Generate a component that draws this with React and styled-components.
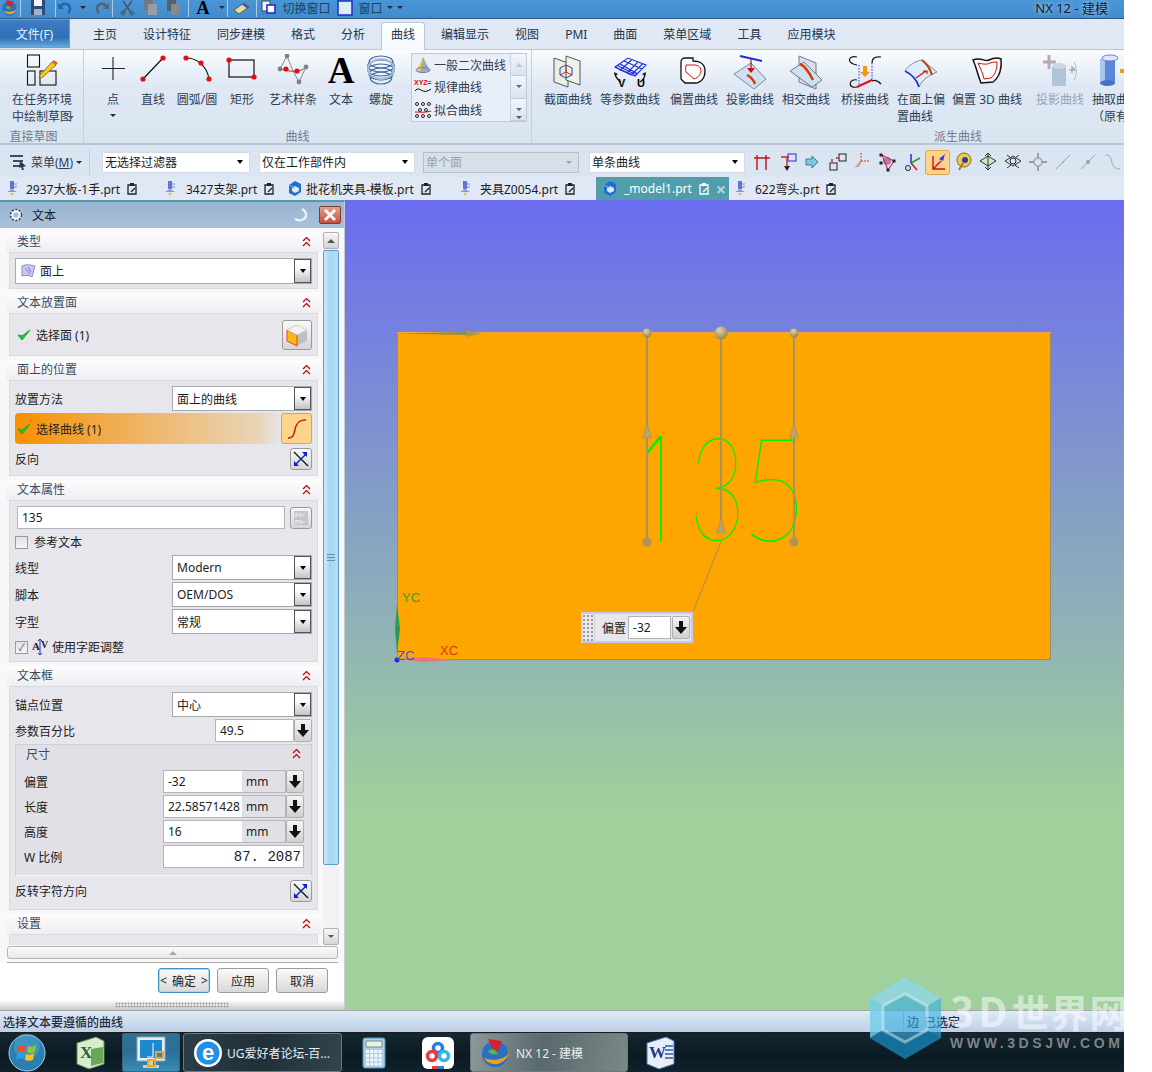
import React from 'react'
import styled, { createGlobalStyle } from 'styled-components'

const UI = `"Noto Sans", "Noto Sans CJK SC", sans-serif`

const GlobalStyle = createGlobalStyle`
  html, body { margin: 0; padding: 0; background: #fff; }
  body { font-family: ${UI}; font-size: 12px; color: #222; }
  * { box-sizing: border-box; }
`

const Frame = styled.div`
  position: relative;
  width: 1124px;
  height: 1072px;
  display: flex;
  flex-direction: column;
  overflow: hidden;
`

/* title bar */
const TitleBar = styled.div`
  height: 19px;
  flex: none;
  display: flex;
  align-items: center;
  padding-bottom: 3px;
  background: linear-gradient(#4a95d4, #3f8ccd);
  border-bottom: 1px solid #2c5a84;
  overflow: hidden;
`
const QuickItem = styled.div`
  width: ${p => p.$w}px;
  flex: none;
  display: flex;
  align-items: center;
  justify-content: center;
  gap: 5px;
  color: #20405c;
  font-size: 12px;
  white-space: nowrap;
`
const QuickSep = styled.div`
  width: 1px;
  height: 18px;
  flex: none;
  background: #a9cbe8;
`
const AppTitle = styled.div`
  margin-left: auto;
  margin-right: 16px;
  color: #10202e;
  font-size: 13px;
  line-height: 14px;
  text-shadow: 0 0 5px #cfe4f5;
`
const SmallCaret = styled.i`
  width: 0;
  height: 0;
  flex: none;
  border-left: 3px solid transparent;
  border-right: 3px solid transparent;
  border-top: 3px solid ${p => p.$c || '#1c2c3c'};
`
const QuickA = styled.span`
  font-family: "Liberation Serif", serif;
  font-weight: 700;
  font-size: 18px;
  line-height: 16px;
  color: #000;
`

/* tabs */
const TabRow = styled.div`
  height: 31px;
  flex: none;
  display: flex;
  align-items: flex-end;
  background: #dfe8f4;
  border-bottom: 1px solid #b9c7d9;
`
const FileButton = styled.div`
  width: 70px;
  height: 29px;
  margin-right: 10px;
  margin-bottom: 1px;
  display: flex;
  align-items: center;
  justify-content: center;
  color: #eaf3fb;
  background: linear-gradient(#3d7dc5, #2e6fb8 65%, #67a8dc);
  border: 1px solid #6c9bcc;
  border-left: none;
`
const Tab = styled.div`
  height: ${p => (p.$active ? 28 : 30)}px;
  padding: 0 ${p => (p.$active ? 9 : 13)}px;
  margin: 0 ${p => (p.$active ? 3 : 0)}px;
  margin-bottom: ${p => (p.$active ? -1 : 0)}px;
  display: flex;
  align-items: center;
  color: #24354a;
  white-space: nowrap;
  ${p => p.$active && `
    padding-bottom: 5px;
    background: linear-gradient(#fff, #f4f8fd);
    border: 1px solid #b9c7d9;
    border-bottom: none;
    border-radius: 3px 3px 0 0;
  `}
`

/* ribbon */
const Ribbon = styled.div`
  height: 95px;
  flex: none;
  display: flex;
  background: linear-gradient(#fafcfe, #dfe8f4 38%, #dae5f2);
  border-bottom: 2px solid #b8c5d6;
  overflow: hidden;
`
const Group = styled.div`
  width: ${p => p.$w}px;
  flex: none;
  display: flex;
  flex-direction: column;
  position: relative;
  ${p => p.$sep && `border-right: 1px solid #c4d1e2;`}
`
const GroupBody = styled.div`
  height: 77px;
  flex: none;
  display: flex;
  padding-left: ${p => p.$pl || 0}px;
`
const GroupLabel = styled.div`
  flex: 1;
  display: flex;
  align-items: center;
  justify-content: center;
  color: #6d7d90;
  padding-right: ${p => p.$pr || 0}px;
  padding-left: ${p => p.$pl || 0}px;
`
const GroupCaret = styled.span`
  position: absolute;
  right: ${p => p.$r || 10}px;
  bottom: 7px;
`
const RibbonBtn = styled.div`
  width: ${p => p.$w}px;
  flex: none;
  display: flex;
  flex-direction: column;
  align-items: center;
  color: ${p => (p.$off ? '#9aa4b2' : '#2e3e52')};
  line-height: 17px;
  white-space: nowrap;
  padding-top: 4px;
`
const IconBox = styled.div`
  height: 37px;
  display: flex;
  justify-content: center;
  align-items: flex-start;
`
const BigA = styled.span`
  font-family: "Liberation Serif", serif;
  font-weight: 700;
  font-size: 37px;
  line-height: 33px;
  color: #000;
`
const CaretSpacer = styled.span`
  margin-top: 6px;
  display: flex;
`
const Gallery = styled.div`
  width: 116px;
  height: 69px;
  margin: 3px 0 0 8px;
  flex: none;
  display: flex;
  background: #e9eff8;
  border: 1px solid #bccada;
`
const GalleryList = styled.div`
  flex: 1;
  display: flex;
  flex-direction: column;
`
const GalleryItem = styled.div`
  height: 23px;
  display: flex;
  align-items: center;
  gap: 2px;
  padding-left: 2px;
  color: #2e3e52;
  white-space: nowrap;
`
const GalleryScroll = styled.div`
  width: 16px;
  flex: none;
  display: flex;
  flex-direction: column;
  border-left: 1px solid #c8d4e2;
`
const GalleryBtn = styled.div`
  flex: 1;
  display: flex;
  align-items: center;
  justify-content: center;
  background: linear-gradient(#f2f6fb, #d8e2ee);
  border-bottom: 1px solid #c0ccdb;
`

/* selection bar */
const SelectionBar = styled.div`
  height: 32px;
  flex: none;
  display: flex;
  align-items: center;
  padding-top: 2px;
  background: #dbe5f2;
`
const MenuBtn = styled.div`
  width: 90px;
  height: 26px;
  flex: none;
  padding-left: 10px;
  display: flex;
  align-items: center;
  gap: 3px;
  color: #2e3e52;
  border-right: 1px solid #c2cfdf;
  white-space: nowrap;
`
const FilterBox = styled.div`
  width: ${p => p.$w}px;
  height: 21px;
  margin-left: ${p => p.$ml}px;
  flex: none;
  display: flex;
  align-items: center;
  justify-content: space-between;
  padding: 0 6px 0 2px;
  background: ${p => (p.$off ? '#d9dfe8' : '#fff')};
  color: ${p => (p.$off ? '#98a2ae' : '#1a1a1a')};
  border: 1px solid ${p => (p.$off ? '#b5bec9' : '#d2dbe6')};
  white-space: nowrap;
`
const ToolStrip = styled.div`
  margin-left: 5px;
  display: flex;
  flex: none;
`
const ToolSlot = styled.div`
  width: 25px;
  height: 25px;
  flex: none;
  display: flex;
  align-items: center;
  justify-content: center;
  ${p => p.$on && `
    background: #fbd38a;
    border: 1px solid #d9a94f;
    border-radius: 3px;
  `}
`

/* open files */
const FileTabs = styled.div`
  height: 23px;
  flex: none;
  display: flex;
  padding-left: 7px;
  background: #dfe8f4;
`
const FileTab = styled.div`
  width: ${p => p.$w}px;
  flex: none;
  display: flex;
  align-items: center;
  gap: 7px;
  padding-left: ${p => (p.$active ? 6 : 0)}px;
  margin-right: ${p => (p.$active ? 6 : 0)}px;
  color: ${p => (p.$active ? '#fff' : '#1c1c1c')};
  background: ${p => (p.$active ? '#4f9eaa' : 'transparent')};
  white-space: nowrap;
`
const FileName = styled.span`
  margin-left: ${p => p.$ml || 0}px;
`
const CloseX = styled.span`
  color: #b8d6da;
  font-size: 18px;
  font-weight: 700;
  line-height: 14px;
`

/* main area */
const Main = styled.div`
  height: 810px;
  flex: none;
  display: flex;
`
const Panel = styled.div`
  width: 345px;
  flex: none;
  display: flex;
  flex-direction: column;
  background: #f8f8f9;
  border-top: 2px solid #4f9eaa;
  border-right: 1px solid #c8ccd2;
`
const PanelHead = styled.div`
  height: 26px;
  flex: none;
  display: flex;
  align-items: center;
  padding: 0 3px 0 9px;
  gap: 9px;
  font-size: 12px;
  color: #16202c;
  background: linear-gradient(#99b5d2, #aac1d9);
`
const HeadSpacer = styled.div`
  flex: 1;
`
const CloseBtn = styled.div`
  width: 22px;
  height: 18px;
  margin-left: 2px;
  display: flex;
  align-items: center;
  justify-content: center;
  background: linear-gradient(#e8a090, #c4503e);
  border: 1px solid #7c3a30;
  border-radius: 2px;
`
const ScrollArea = styled.div`
  height: 713px;
  margin-top: 4px;
  flex: none;
  display: flex;
  padding-left: 6px;
  overflow: hidden;
`
const Sections = styled.div`
  width: 315px;
  flex: none;
  overflow: hidden;
`
const Section = styled.section`
  margin-bottom: 4px;
`
const SectionHead = styled.div`
  height: 20px;
  display: flex;
  align-items: center;
  justify-content: space-between;
  padding: 0 10px 2px 11px;
  color: #3a4a5e;
  background: linear-gradient(#fdfdfe, #eeeef2);
`
const SectionBody = styled.div`
  margin: 0 3px;
  padding: ${p => p.$pad || '5px 5px 5px'};
  background: #e6e6ec;
  border: 1px solid #dadae0;
`
const Row = styled.div`
  height: ${p => p.$h}px;
  margin-top: ${p => p.$mt || 0}px;
  display: flex;
  align-items: center;
  justify-content: space-between;
  color: #222;
  white-space: nowrap;
`
const Inline = styled.div`
  display: flex;
  align-items: center;
  gap: ${p => p.$gap || 5}px;
  padding-left: ${p => p.$pl || 0}px;
`
const Select = styled.div`
  width: ${p => p.$w}px;
  height: ${p => p.$h || 25}px;
  flex: none;
  display: flex;
  align-items: center;
  gap: 4px;
  padding-left: 4px;
  background: #fff;
  border: 1px solid #a8a8ae;
`
const SelectText = styled.span`
  flex: 1;
`
const SelectBtn = styled.div`
  width: 17px;
  align-self: stretch;
  flex: none;
  display: flex;
  align-items: center;
  justify-content: center;
  background: linear-gradient(#fff 30%, #c4c4c4);
  border: 1px solid #555;
`
const CaretDown = styled.i`
  width: 0;
  height: 0;
  border-left: 3.5px solid transparent;
  border-right: 3.5px solid transparent;
  border-top: 4px solid #000;
`
const IconBtn = styled.div`
  width: ${p => p.$s}px;
  height: ${p => p.$s}px;
  flex: none;
  display: flex;
  align-items: center;
  justify-content: center;
  background: ${p => (p.$hot ? '#fdd488' : 'linear-gradient(#f8f8f8, #d6d6d6)')};
  border: 1px solid ${p => (p.$hot ? '#d4a84e' : '#9a9a9a')};
  border-radius: 3px;
`
const HotStrip = styled.div`
  flex: 1;
  height: 31px;
  display: flex;
  align-items: center;
  gap: 5px;
  padding-left: 2px;
  background: linear-gradient(90deg, #f88f00, #f1ab4c 35%, #e8d5b8 92%, #e6e6ec);
  border-radius: 4px 0 0 4px;
`
const TextField = styled.div`
  width: ${p => p.$w}px;
  height: 23px;
  margin-left: ${p => p.$ml || 0}px;
  flex: none;
  display: flex;
  align-items: center;
  padding-left: 4px;
  background: #fff;
  border: 1px solid #b4b4ba;
`
const Check = styled.span`
  width: 13px;
  height: 13px;
  flex: none;
  display: flex;
  align-items: center;
  justify-content: center;
  background: linear-gradient(#e2e2e6, #f6f6f8);
  border: 1px solid #9a9aa0;
  color: #46559a;
  font-size: 10px;
  line-height: 10px;
`
const ArrowBtn = styled.div`
  width: 18px;
  height: 23px;
  flex: none;
  display: flex;
  align-items: center;
  justify-content: center;
  background: linear-gradient(#f4f4f4, #d0d0d0);
  border: 1px solid #b0b0b0;
  border-radius: 2px;
`
const Spinner = styled.div`
  display: flex;
  align-items: center;
`
const DimGroup = styled.div`
  margin-top: 2px;
  height: 132px;
  background: #e0e0e6;
  border: 1px solid #cfcfd6;
  border-bottom-color: #f4f4f6;
`
const DimHead = styled.div`
  height: 22px;
  display: flex;
  align-items: center;
  justify-content: space-between;
  padding: 0 10px 5px 10px;
  color: #3a4a5e;
`
const DimRow = styled.div`
  height: 23px;
  margin-top: ${p => p.$mt || 2}px;
  display: flex;
  align-items: center;
  padding-left: 8px;
`
const DimLabel = styled.span`
  width: 139px;
  flex: none;
`
const DimField = styled.div`
  width: 123px;
  height: 23px;
  flex: none;
  display: flex;
  background: #fff;
  border: 1px solid #b4b4ba;
`
const DimValue = styled.span`
  width: 78px;
  flex: none;
  padding-left: 4px;
  line-height: 21px;
  overflow: hidden;
`
const DimUnit = styled.span`
  flex: 1;
  padding-left: 4px;
  line-height: 22px;
  color: #222;
  background: #e0e0e6;
`
const Ratio = styled.div`
  width: 141px;
  height: 23px;
  flex: none;
  padding-right: 2px;
  text-align: right;
  font-family: "Liberation Mono", monospace;
  font-size: 14px;
  line-height: 22px;
  background: #fff;
  border: 1px solid #b4b4ba;
`
const ScrollBar = styled.div`
  width: 16px;
  margin-left: 2px;
  flex: none;
  display: flex;
  flex-direction: column;
  background: #f2f2f4;
`
const ScrollBtn = styled.div`
  height: 17px;
  flex: none;
  display: flex;
  align-items: center;
  justify-content: center;
  background: linear-gradient(#f8f8f8, #d4d4d4);
  border: 1px solid #b0b0b0;
  border-radius: 2px;
`
const ScrollThumb = styled.div`
  height: 615px;
  margin-top: 1px;
  flex: none;
  display: flex;
  align-items: center;
  justify-content: center;
  background: linear-gradient(90deg, #cfe9fa, #a5d6f4 45%, #b6defa);
  border: 1px solid #5e9cc8;
  border-radius: 2px;
`
const ScrollTrack = styled.div`
  flex: 1;
`
const Grip = styled.div`
  width: 8px;
  height: 7px;
  border-top: 1px solid #5e8fb0;
  border-bottom: 1px solid #5e8fb0;
  background: linear-gradient(#a5d6f4 40%, #5e8fb0 40%, #5e8fb0 60%, #a5d6f4 60%);
`
const CollapseBar = styled.div`
  height: 13px;
  margin: 1px 6px 0 7px;
  flex: none;
  display: flex;
  align-items: center;
  justify-content: center;
  background: linear-gradient(#fafafa, #e8e8ea);
  border: 1px solid #b4b4b4;
  border-radius: 3px;
`
const CaretUp = styled.i`
  width: 0;
  height: 0;
  border-left: 4px solid transparent;
  border-right: 4px solid transparent;
  border-bottom: 4px solid ${p => p.$c || '#a8a8a8'};
`
const PanelRule = styled.div`
  height: 1px;
  margin: 3px 6px 0 7px;
  flex: none;
  background: #a8a8a8;
`
const PanelFoot = styled.div`
  height: 37px;
  flex: none;
  display: flex;
  justify-content: flex-end;
  gap: 7px;
  padding: 5px 16px 0 0;
  background: #fff;
`
const FootBtn = styled.div`
  width: 52px;
  height: 25px;
  display: flex;
  align-items: center;
  justify-content: center;
  gap: ${p => (p.$def ? 5 : 0)}px;
  color: #222;
  background: linear-gradient(#fafafa, #d8d8d8);
  border: 1px solid ${p => (p.$def ? '#3d8fc4' : '#9c9c9c')};
  box-shadow: ${p => (p.$def ? 'inset 0 0 0 1px #a8d8f0' : 'none')};
  border-radius: 3px;
`
const DragBar = styled.div`
  height: 10px;
  flex: none;
  display: flex;
  align-items: center;
  justify-content: center;
  background: linear-gradient(#fff, #c8c8c8);
`
const DragDots = styled.div`
  width: 114px;
  height: 6px;
  background: radial-gradient(#9a9a9a 0.8px, transparent 1.2px) 0 0 / 3px 3px;
`

/* graphics window */
const Viewport = styled.div`
  position: relative;
  flex: 1;
  background: linear-gradient(#6a6cf0, #a0d09c 75%);
`
const ViewSvg = styled.svg`
  display: block;
`
const OffsetPopup = styled.div`
  position: absolute;
  left: 236px;
  top: 412px;
  width: 112px;
  height: 31px;
  display: flex;
  align-items: center;
  gap: 1px;
  background: #e6e6ec;
  border: 1px solid #c7c7ea;
  border-width: 2px 2px 2px 1px;
`
const PopupGrip = styled.div`
  width: 13px;
  align-self: stretch;
  margin-right: 6px;
  flex: none;
  background: radial-gradient(#9c9c9c 1px, transparent 1.5px) 0 0 / 4px 4px;
  border-right: 1px solid #d4d4dc;
`
const PopupField = styled.div`
  width: 43px;
  height: 23px;
  margin-left: 1px;
  flex: none;
  display: flex;
  align-items: center;
  padding-left: 4px;
  background: #fff;
  border: 1px solid #b4b4ba;
`

/* status and task bar */
const StatusBar = styled.div`
  height: 23px;
  flex: none;
  display: flex;
  align-items: center;
  padding-left: 3px;
  color: #1f2d44;
  font-weight: 500;
  background: linear-gradient(#dfeaf6, #bdcee7);
  border-top: 1px solid #a6a6a6;
  border-bottom: 1px solid #1c1c1c;
`
const StatusLeft = styled.div`
  width: 900px;
  flex: none;
`
const StatusRight = styled.div`
  height: 100%;
  display: flex;
  align-items: center;
  gap: 5px;
  padding-left: 3px;
  border-left: 1px solid #a8b8cc;
`
const TaskBar = styled.div`
  height: 39px;
  flex: none;
  display: flex;
  padding-left: 8px;
  background: linear-gradient(#14262f, #0b1a22 60%, #10222b);
`
const TaskSlot = styled.div`
  width: ${p => p.$w}px;
  flex: none;
  display: flex;
  align-items: center;
  justify-content: ${p => p.$left ? 'flex-start' : 'center'};
`
const TaskActive = styled(TaskSlot)`
  margin-right: 3px;
  background: linear-gradient(#2f7294, #2a6f98 50%, #3c8cb4);
  border: 1px solid #3a6478;
  border-radius: 2px;
`
const TaskBtn = styled.div`
  width: ${p => p.$w}px;
  flex: none;
  display: flex;
  align-items: center;
  gap: 4px;
  padding-left: ${p => p.$pl}px;
  color: #e8eef2;
  font-size: 12px;
  white-space: nowrap;
  background: ${p => p.$lit
    ? 'linear-gradient(100deg, #8d9a9c, #59696c 45%, #7a8888)'
    : 'linear-gradient(100deg, #2c3e48, #1f3038 50%, #33454c)'};
  border: 1px solid #6a7a80;
  border-radius: 3px;
`

/* watermark */
const Watermark = styled.div`
  position: absolute;
  left: 869px;
  top: 976px;
  display: flex;
  gap: 8px;
  pointer-events: none;
  white-space: nowrap;
`
const MarkText = styled.div`
  display: flex;
  flex-direction: column;
  padding-top: 9px;
`
const MarkTitle = styled.div`
  color: rgba(255, 255, 255, 0.5);
  font-family: "Noto Sans CJK SC", sans-serif;
  font-weight: 700;
  font-size: 38px;
  line-height: 48px;
  letter-spacing: 1px;
`
const MarkLatin = styled.span`
  font-size: 41px;
  letter-spacing: 4px;
`
const MarkUrl = styled.div`
  color: rgba(190, 190, 190, 0.65);
  font-family: "Liberation Sans", sans-serif;
  font-weight: 700;
  font-size: 14px;
  line-height: 16px;
  letter-spacing: 3.6px;
`

/* ---- drawings ---- */
const Red = ({ x, y, r = 2.6 }) => <circle cx={x} cy={y} r={r} fill="#e01010" />

const NxLogo = ({ s = 20 }) => (
  <svg width={s} height={s} viewBox="0 0 32 32">
    <circle cx="15" cy="17" r="13" fill="#2a6fc0" />
    <path d="M4 21c6 9 20 9 26-6-4 7-16 10-26 6z" fill="#f0a020" />
    <path d="M8 2l14 2-6 14z" fill="#d82030" />
    <path d="M8 14c4-3 8-2 10 3-4 1-8 1-10-3z" fill="#50b848" />
  </svg>
)
const SaveIcon = () => (
  <svg width="16" height="16" viewBox="0 0 16 16">
    <rect x="1" y="0" width="14" height="15" fill="#2c4a78" />
    <rect x="4" y="0" width="8" height="6" fill="#f2f4f8" />
    <rect x="4" y="9" width="8" height="6" fill="#9fb4cc" />
  </svg>
)
const UndoIcon = ({ c = '#1d66b8', flip }) => (
  <svg width="16" height="14" viewBox="0 0 16 14" style={flip ? { transform: 'scaleX(-1)' } : undefined}>
    <path d="M3 6c3-5 10-4 10 2 0 2-1 3-2 4" fill="none" stroke={c} strokeWidth="2.5" />
    <path d="M1 2v6h6z" fill={c} />
  </svg>
)
const ScissorIcon = () => (
  <svg width="15" height="16" viewBox="0 0 15 16">
    <path d="M2 14L12 1M12 14L3 1" stroke="#4d5a66" strokeWidth="1.6" />
    <circle cx="3" cy="13" r="2" fill="none" stroke="#4d5a66" />
    <circle cx="12" cy="13" r="2" fill="none" stroke="#4d5a66" />
  </svg>
)
const CopyIcon = ({ dark }) => (
  <svg width="15" height="16" viewBox="0 0 15 16">
    <rect x="1" y="0" width="9" height="11" fill={dark ? '#55606a' : '#6f7a84'} />
    <rect x="5" y="4" width="9" height="11" fill={dark ? '#808a92' : '#959ea6'} />
  </svg>
)
const PenIcon = () => (
  <svg width="18" height="14" viewBox="0 0 18 14">
    <path d="M1 9l10-7 5 4-10 7z" fill="#e8d8b0" stroke="#6a5a3a" />
    <path d="M11 2l5 4-2 1.5-5-4z" fill="#3a5aa8" />
  </svg>
)
const WinIcon = ({ small }) => (
  <svg width="16" height="16" viewBox="0 0 16 16">
    {small
      ? <>
          <rect x="1" y="1" width="8" height="10" fill="#f0f4f8" stroke="#444" />
          <rect x="6" y="5" width="8" height="8" fill="#fff" stroke="#1b2fd0" strokeWidth="1.6" />
        </>
      : <rect x="1" y="1" width="14" height="14" fill="#dcecf8" stroke="#1b2fd0" strokeWidth="1.5" />}
  </svg>
)

const SketchIcon = () => (
  <svg width="32" height="32" viewBox="0 0 32 32">
    <g fill="none" stroke="#111" strokeWidth="1.1">
      <rect x="1.5" y="1" width="12" height="12" />
      <rect x="1.5" y="17" width="7.5" height="14" />
      <rect x="14" y="17" width="16" height="14" />
    </g>
    <path d="M14 21l12-13 4 3-13 12-4 1z" fill="#f6c820" stroke="#7a5a10" strokeWidth=".8" />
    <path d="M26 8l2-2 4 3-2 2z" fill="#e06030" />
  </svg>
)
const CrossIcon = () => (
  <svg width="32" height="32" viewBox="0 0 32 32">
    <path d="M16 3v23M5 14.500h23" stroke="#222" strokeWidth="1.1" />
  </svg>
)
const LineIcon = () => (
  <svg width="32" height="32" viewBox="0 0 32 32">
    <path d="M6 25L26 4" stroke="#111" strokeWidth="1.2" />
    <Red x={6} y={25} /><Red x={26} y={4} />
  </svg>
)
const ArcIcon = () => (
  <svg width="32" height="32" viewBox="0 0 32 32">
    <path d="M5 4C16 4 26 12 28 25" fill="none" stroke="#111" strokeWidth="1.2" />
    <Red x={5} y={4} /><Red x={20} y={9} /><Red x={28} y={25} />
  </svg>
)
const RectIcon = () => (
  <svg width="32" height="32" viewBox="0 0 32 32">
    <rect x="3" y="6" width="25" height="17" fill="none" stroke="#111" strokeWidth="1.2" />
    <Red x={3} y={6} /><Red x={28} y={23} />
  </svg>
)
const SplineIcon = () => (
  <svg width="34" height="32" viewBox="0 0 34 32">
    <path d="M4 15L11 2l6 15 6 11 7-15" fill="none" stroke="#8c8c8c" />
    <path d="M4 15C10 16 14 18 21 17S28 14 30 13" fill="none" stroke="#b03030" />
    {[[4, 15], [11, 2], [23, 28], [30, 13]].map(([x, y]) => <circle key={x} cx={x} cy={y} r="2.400" fill="#808080" />)}
    <Red x={10} y={15} /><Red x={21} y={17} />
  </svg>
)
const HelixIcon = () => (
  <svg width="32" height="32" viewBox="0 0 32 32">
    <g fill="none" stroke="#41689c" strokeWidth="1.2">
      {[8, 12, 16, 20, 24].map(y => <ellipse key={y} cx="16" cy={y} rx={14 - Math.abs(y - 14) / 3} ry="6" />)}
    </g>
    <ellipse cx="16" cy="15" rx="13" ry="10" fill="none" stroke="#a4bcd8" strokeWidth="2" />
  </svg>
)
const SectionCurveIcon = () => (
  <svg width="36" height="34" viewBox="0 0 36 34">
    <path d="M4 4l14 5v24L4 28z" fill="#e8f0e4" stroke="#555" />
    <path d="M16 2l14 5v24l-14-5z" fill="#eef2e8" stroke="#555" />
    <path d="M10 14l6-3 6 3v7l-6 3-6-3z" fill="none" stroke="#2040c0" />
    <path d="M16 11v7l6 3M16 18l-6 3" fill="none" stroke="#d02020" />
  </svg>
)
const IsoIcon = () => (
  <svg width="36" height="34" viewBox="0 0 36 34">
    <g fill="none" stroke="#1c2fd8" strokeWidth="1.100">
      <path d="M3 13l13-9 18 7-11 11zM8 10l18 10M12 7l18 8M20 5.500l-12 11M26 8l-11 11M31 9.500L19 21" />
      <path d="M5.500 11.500l18 9M3 13l16 8" />
    </g>
    <path d="M3 20c1 4 3 6 6 8M33 20c0 3-2 6-5 8" fill="none" stroke="#111" strokeWidth="1.300" />
    <path d="M2 18l4 2-3 2zM34 18l-4 2 3 2z" fill="#111" />
    <text x="6" y="33" fontSize="11" fontFamily="Liberation Sans" fontWeight="700">V</text>
    <text x="25" y="33" fontSize="11" fontFamily="Liberation Sans" fontWeight="700">U</text>
  </svg>
)
const OffsetIcon = () => (
  <svg width="32" height="32" viewBox="0 0 32 32">
    <path d="M3 8c0-3 2-4 4-4h8v3c8 0 12 4 12 10 0 7-4 12-10 12H7l-4-4z" fill="#fff" stroke="#111" strokeWidth="1.300" />
    <path d="M8 11h8c5 0 7 3 7 6s-3 7-7 8l-8-7c-1-2 0-5 0-7z" fill="none" stroke="#d01010" strokeWidth="1" />
  </svg>
)
const ProjectIcon = () => (
  <svg width="36" height="36" viewBox="0 0 36 36">
    <path d="M8 2l22 5" stroke="#1c2fd8" strokeWidth="2" />
    <path d="M2 20L19 9l15 16-12 10z" fill="#cfe0ee" stroke="#7a8a9a" />
    <path d="M19 5v12" stroke="#c01010" strokeWidth="1.200" />
    <path d="M15 14h8l-4 5z" fill="#d01010" />
    <path d="M15 21c4 2 7 6 8 9" fill="none" stroke="#d03a10" strokeWidth="2.500" />
  </svg>
)
const IntersectIcon = () => (
  <svg width="36" height="36" viewBox="0 0 36 36">
    <path d="M11 2l17 7v26l-17-7z" fill="#d9deea" stroke="#6e7a8c" />
    <path d="M2 17L16 8l18 18-10 7z" fill="#cfe0ee" stroke="#6e7a8c" />
    <path d="M12 10c5 2 10 10 13 16" fill="none" stroke="#d03a10" strokeWidth="2.500" />
  </svg>
)
const BridgeIcon = () => (
  <svg width="36" height="36" viewBox="0 0 36 36">
    <path d="M10 3C0 1 0 10 10 11M10 26c-8-2-10 9 0 7" fill="none" stroke="#111" strokeWidth="1.200" />
    <path d="M34 3c-8-1-9 3-9 6M34 30c-4-4-7-4-9-3" fill="none" stroke="#111" strokeWidth="1.200" />
    <path d="M12 11v20M25 9v18" stroke="#1c2fd8" strokeDasharray="1.500 1.500" />
    <path d="M10 33l15-7" stroke="#e01010" strokeWidth="2" />
    <path d="M16 12h4v6h3l-5 5-5-5h3z" fill="#f0981c" />
  </svg>
)
const OnFaceIcon = () => (
  <svg width="36" height="34" viewBox="0 0 36 34">
    <path d="M2 17c4-6 10-10 17-11l15 12c-8 3-15 8-18 15C14 26 8 20 2 17z" fill="#e0ecf6" stroke="#7a8a9a" />
    <path d="M2 17c6 3 12 9 14 16" fill="none" stroke="#1c2fd8" strokeWidth="1.600" />
    <path d="M19 6c5 4 8 8 10 15" fill="none" stroke="#d03a10" strokeWidth="2.200" />
    <path d="M13 24l10-7m-3 0h4v3" fill="none" stroke="#c01010" strokeWidth="1.200" />
  </svg>
)
const Offset3dIcon = () => (
  <svg width="34" height="32" viewBox="0 0 34 32">
    <path d="M3 6c8-3 12 2 16 0 4-2 8-3 12-1 1 8-1 18-8 23L11 29C8 22 6 12 3 6z" fill="#fafafa" stroke="#111" strokeWidth="1.500" />
    <path d="M8 9c5 1 8 2 12 0 3-1 5-1 7-1 0 6-1 12-6 16l-7 1C13 19 10 14 8 9z" fill="none" stroke="#d01010" />
  </svg>
)
const GreyProjectIcon = () => (
  <svg width="38" height="34" viewBox="0 0 38 34">
    <path d="M8 1v14M2 8h13" stroke="#b8a8b4" strokeWidth="3" />
    <path d="M11 12h14v20H11z" fill="#b0c4d8" />
    <ellipse cx="18" cy="12" rx="7" ry="3" fill="#ccd8e4" />
    <path d="M28 16h6l-3-3v6" fill="none" stroke="#a4aebc" strokeWidth="1.500" />
    <path d="M33 8c3 5 3 13 0 18" fill="none" stroke="#b0b8c4" />
  </svg>
)
const ExtractIcon = () => (
  <svg width="40" height="34" viewBox="0 0 40 34">
    <path d="M4 5h15v24H4z" fill="#5d86d8" />
    <path d="M4 5h5v24H4z" fill="#a8c4f0" />
    <ellipse cx="11.500" cy="29" rx="7.500" ry="3" fill="#4a70c4" />
    <ellipse cx="14" cy="4" rx="8" ry="3" fill="#e0e8f4" stroke="#5d86d8" />
    <path d="M24 15h14v-3l4 5-4 5v-3H24z" fill="#f0981c" />
  </svg>
)
const ConicIcon = () => (
  <svg width="18" height="18" viewBox="0 0 18 18">
    <path d="M9 1l7 14c-4 3-10 3-14 0z" fill="#f0d040" />
    <path d="M9 1l-3 15 10-1z" fill="#8098e0" opacity=".7" />
    <ellipse cx="9" cy="14" rx="7" ry="2.500" fill="none" stroke="#6a7ad0" />
  </svg>
)
const LawIcon = () => (
  <svg width="18" height="18" viewBox="0 0 18 18">
    <text x="0" y="7" fontSize="7" fontWeight="700" fill="#d01010" fontFamily="Liberation Sans">XYZ=</text>
    <path d="M1 13c3-4 5-1 8 0s5 0 8-2" fill="none" stroke="#111" />
  </svg>
)
const FitIcon = () => (
  <svg width="18" height="18" viewBox="0 0 18 18">
    <path d="M1 11c5 0 10 1 16-1" fill="none" stroke="#d01010" />
    {[[3, 3], [9, 3], [15, 3], [3, 15], [9, 15], [15, 15], [6, 9], [12, 9]].map(([x, y]) => <circle key={`${x}${y}`} cx={x} cy={y} r="1.500" fill="none" stroke="#222" />)}
  </svg>
)
const MenuIcon = () => (
  <svg width="18" height="18" viewBox="0 0 18 18">
    <path d="M0 3h13M3 8h10M3 13h10" stroke="#3e4e60" strokeWidth="2" />
    <path d="M10 8l6 5-3 1 1 3-2 0-1-3-2 1z" fill="#2c3a48" />
  </svg>
)

const TOOLS = [
  <><path d="M4 3v15M13 3v15M1 6h16" stroke="#c01010" strokeWidth="1.400" /></>,
  <><rect x="10" y="2" width="8" height="7" fill="none" stroke="#1c2fd8" /><path d="M3 5h8M9 5v11" stroke="#d02020" strokeWidth="1.400" /><path d="M6 14h6l-3 5z" fill="#222" /></>,
  <><path d="M3 7h6V4l6 6-6 6v-3H3z" fill="#7ec8e0" stroke="#3d7a9a" /></>,
  <><rect x="11" y="2" width="7" height="7" fill="none" stroke="#222" /><rect x="2" y="11" width="7" height="7" fill="none" stroke="#222" /><path d="M8 6h3M4 10V7" stroke="#d02020" strokeWidth="1.400" /></>,
  <><path d="M8 9h9M8 9V1M8 9l-6 7" stroke="#d44020" strokeDasharray="2 1" /><path d="M8 9l-3 6" stroke="#888" /></>,
  <><path d="M4 3l12 6-6 9z" fill="none" stroke="#c01050" /><circle cx="9" cy="9" r="4" fill="#b03060" opacity=".6" />{[[3, 3], [16, 9], [10, 18], [3, 11]].map(([x, y]) => <rect key={x + y} x={x - 1.500} y={y - 1.500} width="3" height="3" fill="#222" />)}</>,
  <><path d="M8 11V2" stroke="#1c2fd8" strokeWidth="1.500" /><path d="M8 11l9-5" stroke="#20a020" strokeWidth="1.500" /><path d="M8 11l6 7" stroke="#d01010" strokeWidth="1.500" /><circle cx="5" cy="16" r="2.500" fill="none" stroke="#222" /></>,
  <><path d="M5 4v13h12M5 17l8-8" fill="none" stroke="#d01010" strokeWidth="1.400" /><path d="M11 7l6-5-2 7z" fill="#3040c8" /></>,
  <><circle cx="11" cy="8" r="7" fill="#f0c850" stroke="#8a6a20" /><circle cx="12" cy="8" r="3" fill="#2a3ea8" /><path d="M6 18l4-7" stroke="#a08020" strokeWidth="2" /></>,
  <><path d="M2 9l8-5 8 5-8 5z" fill="#c8e8c8" stroke="#333" /><path d="M10 1v17M7 4l3-3 3 3M7 15l3 3 3-3" fill="none" stroke="#333" /></>,
  <><path d="M2 9l8-5 8 5-8 5z" fill="#d8e8f0" stroke="#333" /><circle cx="10" cy="9" r="3" fill="none" stroke="#223" /><path d="M4 3l4 3M16 3l-4 3M4 16l4-3M16 16l-4-3" stroke="#333" /></>,
  <><circle cx="10" cy="10" r="4" fill="none" stroke="#aab4c0" strokeWidth="2" /><path d="M10 1v5M10 14v5M1 10h5M14 10h5" stroke="#a09aa8" strokeWidth="2" /></>,
  <><path d="M3 17L17 3" stroke="#9ca6b2" /><circle cx="10" cy="10" r="1" fill="#9ca6b2" /></>,
  <><path d="M3 17L17 3" stroke="#9ca6b2" /><circle cx="10" cy="10" r="2" fill="#9ca6b2" /></>,
  <><path d="M3 3c5 0 5 4 6 8 1 4 4 6 8 6" fill="none" stroke="#9ca6b2" /></>,
]

const PinIcon = () => (
  <svg width="10" height="15" viewBox="0 0 10 15">
    <path d="M3 0h4v8H3z" fill="#5a7ad0" />
    <path d="M7 3h3M7 6h3" stroke="#7d8ca8" />
    <path d="M0 11h10l-5-3z" fill="#8a9ac8" />
    <path d="M3 12l2 3 2-3z" fill="#f0c020" />
  </svg>
)
const PartCube = () => (
  <svg width="15" height="15" viewBox="0 0 15 15">
    <path d="M2 4l6-4 6 3v8l-6 4-6-3z" fill="#1f6fd0" />
    <path d="M8 5l4 2v3l-4 2-3-2V7z" fill="#dce9fa" />
    <path d="M2 4l6 3" stroke="#8ab8ee" />
  </svg>
)
const DocIcon = ({ c = '#222' }) => (
  <svg width="10" height="12" viewBox="0 0 10 12">
    <path d="M1 2h8v9H1z" fill="none" stroke={c} strokeWidth="1.300" />
    <path d="M3 0h4v3H3z" fill={c} />
    <path d="M4 9l4-4" stroke={c} strokeWidth="1.300" />
  </svg>
)

const Chevrons = () => (
  <svg width="9" height="11" viewBox="0 0 9 11">
    <path d="M1 5l3.500-3.500L8 5M1 10l3.500-3.500L8 10" fill="none" stroke="#c80000" strokeWidth="1.200" />
  </svg>
)
const CheckMark = () => (
  <svg width="14" height="12" viewBox="0 0 14 12">
    <path d="M1 6l4 5 8-10-8 6z" fill="#22c83a" stroke="#18a82c" strokeWidth="1" />
  </svg>
)
const FaceIcon = () => (
  <svg width="16" height="16" viewBox="0 0 16 16">
    <path d="M2 3c4-2 9-1 13 0l-3 11c-3-2-7-2-10-1z" fill="#c6c8f0" stroke="#8a8ec8" />
    <path d="M5 5l5 6M8 4l3 5" stroke="#7a7ec0" />
  </svg>
)
const CubeBtnIcon = () => (
  <svg width="24" height="24" viewBox="0 0 24 24">
    <path d="M12 2l10 5v11l-10 5-10-5V7z" fill="#c0c0c0" />
    <path d="M2 7l10 5v11L2 18z" fill="#f8b818" stroke="#e84818" />
    <path d="M2 7l10-5 10 5-10 5z" fill="#f2f2f2" stroke="#bbb" strokeWidth=".5" />
  </svg>
)
const SCurve = () => (
  <svg width="24" height="24" viewBox="0 0 24 24">
    <path d="M3 21c7 1 6-8 8-12s4-6 10-6" fill="none" stroke="#c01818" strokeWidth="1.500" />
  </svg>
)
const FlipIcon = () => (
  <svg width="18" height="18" viewBox="0 0 18 18">
    <path d="M2 2l14 14" stroke="#111" strokeWidth="1.200" />
    <path d="M4 14L14 4" stroke="#1020c0" strokeWidth="1.500" />
    <path d="M15 2v5l-5-5zM2 16v-5l5 5z" fill="#1020c0" />
  </svg>
)
const ThickArrow = () => (
  <svg width="12" height="13" viewBox="0 0 12 13">
    <path d="M4 0h4v6h4l-6 7-6-7h4z" fill="#111" />
  </svg>
)
const KernIcon = () => (
  <svg width="16" height="18" viewBox="0 0 16 18">
    <text x="0" y="12" fontSize="11" fontWeight="700" fontFamily="Liberation Serif" fill="#222">A</text>
    <text x="9" y="10" fontSize="10" fontWeight="700" fontFamily="Liberation Serif" fill="#222">V</text>
    <path d="M8 1v16M6 3l2-2 2 2M6 15l2 2 2-2" fill="none" stroke="#2030c0" />
  </svg>
)
const ParamIcon = () => (
  <svg width="14" height="14" viewBox="0 0 14 14">
    <rect width="14" height="14" fill="#c4c4ca" />
    <text x="1" y="6" fontSize="5.500" fontWeight="700" fontFamily="Liberation Sans" fill="#f2f2f4">P1=</text>
    <text x="1" y="12.500" fontSize="5.500" fontWeight="700" fontFamily="Liberation Sans" fill="#f2f2f4">P2=</text>
  </svg>
)
const GearIcon = () => (
  <svg width="14" height="14" viewBox="0 0 14 14">
    <circle cx="7" cy="7" r="4" fill="none" stroke="#f4f6f8" strokeWidth="3" />
    <circle cx="7" cy="7" r="5.500" fill="none" stroke="#304458" strokeWidth="1.500" strokeDasharray="2 1.500" />
  </svg>
)
const ResetIcon = () => (
  <svg width="14" height="14" viewBox="0 0 14 14">
    <path d="M1 11c5 3 12 0 11-5-.400-2-2-4-4-5" fill="none" stroke="#eef2f6" strokeWidth="2.200" />
  </svg>
)
const CloseGlyph = () => (
  <svg width="14" height="12" viewBox="0 0 14 12">
    <path d="M2 1l10 10M12 1L2 11" stroke="#fff" strokeWidth="2.800" />
  </svg>
)

const StartOrb = () => (
  <svg width="38" height="38" viewBox="0 0 38 38">
    <circle cx="19" cy="19" r="18" fill="#2a7fb0" stroke="#a8d0e8" />
    <circle cx="19" cy="12" r="13" fill="#6ab8de" opacity=".35" />
    <path d="M10 13c3-2 6-2 8-1l-1 6c-3-1-6-1-8 1z" fill="#e8502a" />
    <path d="M20 12c3 1 5 1 8-1l-1 7c-3 2-6 1-8 0z" fill="#8cc63f" />
    <path d="M9 20c3-2 5-2 8-1l-1 6c-3-1-6-1-8 1z" fill="#2a9fe0" />
    <path d="M18 20c3 1 6 1 8-1l-1 7c-3 1-6 1-8 0z" fill="#f8c020" />
  </svg>
)
const ExcelIcon = () => (
  <svg width="32" height="34" viewBox="0 0 32 34">
    <path d="M3 7L22 1l8 4v23l-15 5-12-5z" fill="#d8ecd0" stroke="#608a50" />
    <path d="M17 13l12-2v16l-12 3z" fill="#6aa858" />
    <text x="6" y="22" fontSize="17" fontWeight="700" fontFamily="Liberation Serif" fill="#1c6a2c">X</text>
  </svg>
)
const MonitorIcon = () => (
  <svg width="36" height="36" viewBox="0 0 36 36">
    <rect x="4" y="2" width="28" height="24" fill="#e8eef4" stroke="#8fa0b0" />
    <rect x="7" y="5" width="22" height="18" fill="#1e88d0" />
    <path d="M16 26h4v4h6v3H10v-3h6z" fill="#c8d0d8" />
    <path d="M20 8v14M20 22h-6" stroke="#fff" />
    <rect x="23" y="17" width="7" height="6" fill="none" stroke="#f0a820" strokeWidth="2" />
    <rect x="15" y="25" width="7" height="6" fill="none" stroke="#f0a820" strokeWidth="2" />
  </svg>
)
const IEIcon = () => (
  <svg width="30" height="30" viewBox="0 0 30 30">
    <circle cx="15" cy="15" r="14" fill="#fff" />
    <circle cx="15" cy="15" r="11.500" fill="#1f8fe8" />
    <text x="15" y="22" textAnchor="middle" fontSize="22" fontWeight="700" fontFamily="Liberation Sans" fill="#fff">e</text>
  </svg>
)
const CalcIcon = () => (
  <svg width="24" height="32" viewBox="0 0 24 32">
    <rect x="1" y="1" width="22" height="30" rx="2" fill="#a8d0ec" stroke="#5a90b8" />
    <rect x="4" y="4" width="16" height="6" fill="#e8f4d8" stroke="#789" />
    {[0, 1, 2, 3].map(r => [0, 1, 2, 3].map(c => <rect key={`${r}${c}`} x={4 + c * 4.200} y={13 + r * 4.200} width="3" height="3" fill="#f4f8fc" />))}
  </svg>
)
const BaiduIcon = () => (
  <svg width="32" height="32" viewBox="0 0 32 32">
    <rect width="32" height="32" rx="6" fill="#fff" />
    <g fill="none" strokeWidth="3.500">
      <circle cx="16" cy="11" r="4.500" stroke="#2e7ce8" />
      <circle cx="10" cy="19" r="4.500" stroke="#e83a3a" />
      <circle cx="22" cy="19" r="4.500" stroke="#30b8e8" />
    </g>
    <path d="M10 29h6v3h-6z" fill="#e83a3a" />
    <path d="M16 29h6v3h-6z" fill="#2e7ce8" />
  </svg>
)
const WordIcon = () => (
  <svg width="32" height="34" viewBox="0 0 32 34">
    <path d="M3 7L22 1l8 4v23l-15 5-12-5z" fill="#e8eef8" stroke="#5070b0" />
    <path d="M21 10h8M21 14h8M21 18h8M21 22h8" stroke="#3058a8" strokeWidth="1.500" />
    <text x="5" y="22" fontSize="17" fontWeight="700" fontFamily="Liberation Serif" fill="#1c3a90">W</text>
  </svg>
)
const HexMark = () => (
  <svg width="73" height="84" viewBox="0 0 73 84">
    <path d="M36 1l36 21v40L36 83 1 62V22z" fill="#38aee0" opacity=".62" />
    <path d="M36 1L72 22 58 30 36 18 14 30 1 22z" fill="#c0ece8" opacity=".55" />
    <path d="M1 22l13 8v24L1 62z" fill="#90dcf0" opacity=".55" />
    <path d="M14 54l22 12 22-12 14 8-36 21L1 62z" fill="#0a6c98" opacity=".65" />
    <path d="M36 18l22 12v24L36 66 14 54V30z" fill="none" stroke="#d8f0f4" strokeWidth="3" opacity=".5" />
  </svg>
)

const Cone = ({ x, y, h = 15, w = 9 }) => (
  <path d={`M${x} ${y}l${w / 2} ${h}h${-w}z`} fill="#b9a468" stroke="#9c8a58" strokeWidth=".5" />
)

/* the text on the part: real text in a hairline face, squeezed to the narrow CAD digits */
const Digit = ({ x, sx, font, children }) => (
  <text
    transform={`translate(${x} 541) scale(${sx} 1)`}
    fontFamily={font}
    fontWeight="100"
    fontSize="144"
    fill="#00f000"
  >
    {children}
  </text>
)

/* graphics window drawing, coordinates match the full screen picture */
const Scene = () => (
  <ViewSvg width="779" height="810" viewBox="345 200 779 810">
    <defs>
      <radialGradient id="ball" cx=".4" cy=".3" r=".8">
        <stop offset="0" stopColor="#e2d4a0" />
        <stop offset="1" stopColor="#8c7a48" />
      </radialGradient>
    </defs>
    <rect x="397.500" y="332.500" width="653" height="327" fill="#ffa500" stroke="#9c8a70" strokeWidth="1" />
    <path d="M397 332.500h654" stroke="#f4a44a" />
    <path d="M398 333.500l68-1.500v3z" fill="#8f8a50" />
    <path d="M466 330l16 3.500-16 3.500z" fill="#a89650" />
    <Digit x={640} sx={0.6} font="Inter, Lato, sans-serif">1</Digit>
    <Digit x={689} sx={0.68} font="Lato, Inter, sans-serif">3</Digit>
    <Digit x={741} sx={0.8} font="Lato, Inter, sans-serif">5</Digit>
    <g stroke="#a8925e" strokeWidth="2">
      <path d="M647 333v209M721 333v190M794 333v209" />
    </g>
    <Cone x={647} y={423} /><Cone x={794} y={423} /><Cone x={721} y={518} />
    <circle cx="647" cy="333" r="4.500" fill="url(#ball)" />
    <circle cx="721" cy="333" r="6.500" fill="url(#ball)" />
    <circle cx="794" cy="333" r="4.500" fill="url(#ball)" />
    <circle cx="647" cy="542" r="4.500" fill="#b09358" />
    <circle cx="794" cy="542" r="4.500" fill="#b09358" />
    <path d="M721 542l-28 70" stroke="#a08a60" />
    <path d="M397 604l3 25-3 25-2-25z" fill="#2f9a58" />
    <path d="M397 659l28-2 29 3-29 2z" fill="#e87878" />
    <circle cx="397" cy="660" r="2.500" fill="#1c2fd8" />
    <text x="402" y="602" fontSize="13" fontFamily="Liberation Sans" fill="#3d9a40">YC</text>
    <text x="397" y="660" fontSize="13" fontFamily="Liberation Sans" fill="#3850e8">ZC</text>
    <text x="440" y="655" fontSize="13" fontFamily="Liberation Sans" fill="#d83820">XC</text>
  </ViewSvg>
)

const RIBBON_A = [
  { w: 40, label: '直线', Icon: LineIcon },
  { w: 48, label: '圆弧/圆', Icon: ArcIcon },
  { w: 42, label: '矩形', Icon: RectIcon },
  { w: 60, label: '艺术样条', Icon: SplineIcon },
]
const RIBBON_B = [
  { w: 56, label: '截面曲线', Icon: SectionCurveIcon },
  { w: 68, label: '等参数曲线', Icon: IsoIcon },
  { w: 60, label: '偏置曲线', Icon: OffsetIcon },
  { w: 52, label: '投影曲线', Icon: ProjectIcon },
  { w: 60, label: '相交曲线', Icon: IntersectIcon },
  { w: 58, label: '桥接曲线', Icon: BridgeIcon },
  { w: 54, label: '在面上偏', second: '置曲线', Icon: OnFaceIcon },
  { w: 78, label: '偏置 3D 曲线', Icon: Offset3dIcon },
  { w: 68, label: '投影曲线', Icon: GreyProjectIcon, off: true },
  { w: 44, label: '抽取曲线', second: '（原有', Icon: ExtractIcon },
]
const TABS = ['主页', '设计特征', '同步建模', '格式', '分析', '曲线', '编辑显示', '视图', 'PMI', '曲面', '菜单区域', '工具', '应用模块']
const FILES = [
  { w: 158, name: '2937大板-1手.prt', Icon: PinIcon, ml: 2 },
  { w: 122, name: '3427支架.prt', Icon: PinIcon, ml: 4 },
  { w: 173, name: '批花机夹具-模板.prt', Icon: PartCube, ml: -3 },
  { w: 136, name: '夹具Z0054.prt', Icon: PinIcon, ml: 3 },
]

const Head = ({ title }) => (
  <SectionHead>{title}<Chevrons /></SectionHead>
)
const DropRow = ({ label, value, mt }) => (
  <Row $h={25} $mt={mt}>
    {label}
    <Select $w={140}><SelectText>{value}</SelectText><SelectBtn><CaretDown /></SelectBtn></Select>
  </Row>
)
const DimLine = ({ label, value, mt }) => (
  <DimRow $mt={mt}>
    <DimLabel>{label}</DimLabel>
    <DimField><DimValue>{value}</DimValue><DimUnit>mm</DimUnit></DimField>
    <ArrowBtn><ThickArrow /></ArrowBtn>
  </DimRow>
)

const App = () => {
  return (
    <Frame>
      <GlobalStyle />
      <TitleBar>
        <QuickItem $w={20}><NxLogo s={18} /></QuickItem>
        <QuickSep />
        <QuickItem $w={34}><SaveIcon /></QuickItem>
        <QuickSep />
        <QuickItem $w={18}><UndoIcon /></QuickItem>
        <QuickItem $w={18}><SmallCaret /></QuickItem>
        <QuickItem $w={20}><UndoIcon c="#54646e" flip /></QuickItem>
        <QuickSep />
        <QuickItem $w={28}><ScissorIcon /></QuickItem>
        <QuickItem $w={18}><CopyIcon /></QuickItem>
        <QuickItem $w={29}><CopyIcon dark /></QuickItem>
        <QuickSep />
        <QuickItem $w={28}><QuickA>A</QuickA></QuickItem>
        <QuickItem $w={10}><SmallCaret /></QuickItem>
        <QuickSep />
        <QuickItem $w={28}><PenIcon /></QuickItem>
        <QuickSep />
        <QuickItem $w={78}><WinIcon small />切换窗口</QuickItem>
        <QuickItem $w={50}><WinIcon />窗口</QuickItem>
        <QuickItem $w={10}><SmallCaret /></QuickItem>
        <QuickItem $w={10}><SmallCaret /></QuickItem>
        <AppTitle>NX 12 - 建模</AppTitle>
      </TitleBar>

      <TabRow>
        <FileButton>文件(F)</FileButton>
        {TABS.map(t => <Tab key={t} $active={t === '曲线'}>{t}</Tab>)}
      </TabRow>

      <Ribbon>
        <Group $w={84} $sep>
          <GroupBody>
            <RibbonBtn $w={84}>
              <IconBox><SketchIcon /></IconBox>
              在任务环境
              <br />
              中绘制草图
            </RibbonBtn>
          </GroupBody>
          <GroupLabel $pr={16}>直接草图</GroupLabel>
          <GroupCaret $r={9}><SmallCaret $c="#556" /></GroupCaret>
        </Group>
        <Group $w={448} $sep>
          <GroupBody $pl={9}>
            <RibbonBtn $w={40}>
              <IconBox><CrossIcon /></IconBox>
              点
              <CaretSpacer><SmallCaret /></CaretSpacer>
            </RibbonBtn>
            {RIBBON_A.map(b => (
              <RibbonBtn key={b.label} $w={b.w}><IconBox><b.Icon /></IconBox>{b.label}</RibbonBtn>
            ))}
            <RibbonBtn $w={36}><IconBox><BigA>A</BigA></IconBox>文本</RibbonBtn>
            <RibbonBtn $w={44}><IconBox><HelixIcon /></IconBox>螺旋</RibbonBtn>
            <Gallery>
              <GalleryList>
                <GalleryItem><ConicIcon />一般二次曲线</GalleryItem>
                <GalleryItem><LawIcon />规律曲线</GalleryItem>
                <GalleryItem><FitIcon />拟合曲线</GalleryItem>
              </GalleryList>
              <GalleryScroll>
                <GalleryBtn><CaretUp $c="#c4c4dc" /></GalleryBtn>
                <GalleryBtn><SmallCaret $c="#667" /></GalleryBtn>
                <GalleryBtn><SmallCaret $c="#667" /></GalleryBtn>
              </GalleryScroll>
            </Gallery>
          </GroupBody>
          <GroupLabel $pr={20}>曲线</GroupLabel>
          <GroupCaret $r={9}><SmallCaret $c="#556" /></GroupCaret>
        </Group>
        <Group $w={600}>
          <GroupBody $pl={8}>
            {RIBBON_B.map(b => (
              <RibbonBtn key={b.w + b.label} $w={b.w} $off={b.off}>
                <IconBox><b.Icon /></IconBox>
                {b.label}
                {b.second && <br />}
                {b.second}
              </RibbonBtn>
            ))}
          </GroupBody>
          <GroupLabel $pl={252}>派生曲线</GroupLabel>
        </Group>
      </Ribbon>

      <SelectionBar>
        <MenuBtn><MenuIcon /><span>菜单(<u>M</u>)</span><SmallCaret /></MenuBtn>
        <FilterBox $w={148} $ml={12}>无选择过滤器<CaretDown /></FilterBox>
        <FilterBox $w={156} $ml={9}>仅在工作部件内<CaretDown /></FilterBox>
        <FilterBox $w={156} $ml={8} $off>单个面<SmallCaret $c="#9aa4b0" /></FilterBox>
        <FilterBox $w={156} $ml={10}>单条曲线<CaretDown /></FilterBox>
        <ToolStrip>
          {TOOLS.map((t, i) => (
            <ToolSlot key={i} $on={i === 7}>
              <svg width="20" height="20" viewBox="0 0 20 20">{t}</svg>
            </ToolSlot>
          ))}
        </ToolStrip>
      </SelectionBar>

      <FileTabs>
        {FILES.map(f => (
          <FileTab key={f.name} $w={f.w}><f.Icon /><FileName $ml={f.ml}>{f.name}</FileName><DocIcon /></FileTab>
        ))}
        <FileTab $w={133} $active><PartCube />_model1.prt<DocIcon c="#fff" /><CloseX>×</CloseX></FileTab>
        <FileTab $w={120}><PinIcon /><FileName $ml={3}>622弯头.prt</FileName><DocIcon /></FileTab>
      </FileTabs>

      <Main>
        <Panel>
          <PanelHead>
            <GearIcon />
            文本
            <HeadSpacer />
            <ResetIcon />
            <CloseBtn><CloseGlyph /></CloseBtn>
          </PanelHead>
          <ScrollArea>
            <Sections>
              <Section>
                <Head title="类型" />
                <SectionBody $pad="5px 5px 4px">
                  <Select $h={26}><FaceIcon /><SelectText>面上</SelectText><SelectBtn><CaretDown /></SelectBtn></Select>
                </SectionBody>
              </Section>
              <Section>
                <Head title="文本放置面" />
                <SectionBody $pad="6px 5px 5px">
                  <Row $h={30}>
                    <Inline $pl={2}><CheckMark />选择面 (1)</Inline>
                    <IconBtn $s={30}><CubeBtnIcon /></IconBtn>
                  </Row>
                </SectionBody>
              </Section>
              <Section>
                <Head title="面上的位置" />
                <SectionBody>
                  <DropRow label="放置方法" value="面上的曲线" />
                  <Row $h={31} $mt={2}>
                    <HotStrip><CheckMark />选择曲线 (1)</HotStrip>
                    <IconBtn $s={31} $hot><SCurve /></IconBtn>
                  </Row>
                  <Row $h={22} $mt={4}>反向<IconBtn $s={22}><FlipIcon /></IconBtn></Row>
                </SectionBody>
              </Section>
              <Section>
                <Head title="文本属性" />
                <SectionBody $pad="5px 5px 7px">
                  <Row $h={23}>
                    <TextField $w={268} $ml={2}>135</TextField>
                    <IconBtn $s={22}><ParamIcon /></IconBtn>
                  </Row>
                  <Row $h={14} $mt={6}>
                    <Inline $gap={6}><Check />参考文本</Inline>
                  </Row>
                  <DropRow label="线型" value="Modern" mt={6} />
                  <DropRow label="脚本" value="OEM/DOS" mt={2} />
                  <DropRow label="字型" value="常规" mt={2} />
                  <Row $h={14} $mt={6}>
                    <Inline $gap={4}><Check>✓</Check><KernIcon />使用字距调整</Inline>
                  </Row>
                </SectionBody>
              </Section>
              <Section>
                <Head title="文本框" />
                <SectionBody $pad="5px 5px 7px">
                  <DropRow label="锚点位置" value="中心" />
                  <Row $h={23} $mt={2}>
                    参数百分比
                    <Spinner>
                      <TextField $w={79}>49.5</TextField>
                      <ArrowBtn><ThickArrow /></ArrowBtn>
                    </Spinner>
                  </Row>
                  <DimGroup>
                    <DimHead>尺寸<Chevrons /></DimHead>
                    <DimLine label="偏置" value="-32" mt={3} />
                    <DimLine label="长度" value="22.58571428" />
                    <DimLine label="高度" value="16" />
                    <DimRow>
                      <DimLabel>W 比例</DimLabel>
                      <Ratio>87. 2087</Ratio>
                    </DimRow>
                  </DimGroup>
                  <Row $h={22} $mt={4}>反转字符方向<IconBtn $s={22}><FlipIcon /></IconBtn></Row>
                </SectionBody>
              </Section>
              <Section>
                <Head title="设置" />
                <SectionBody />
              </Section>
            </Sections>
            <ScrollBar>
              <ScrollBtn><CaretUp $c="#555" /></ScrollBtn>
              <ScrollThumb><Grip /></ScrollThumb>
              <ScrollTrack />
              <ScrollBtn><SmallCaret $c="#555" /></ScrollBtn>
            </ScrollBar>
          </ScrollArea>
          <CollapseBar><CaretUp /></CollapseBar>
          <PanelRule />
          <PanelFoot>
            <FootBtn $def><span>&lt;</span>确定<span>&gt;</span></FootBtn>
            <FootBtn>应用</FootBtn>
            <FootBtn>取消</FootBtn>
          </PanelFoot>
          <DragBar><DragDots /></DragBar>
        </Panel>
        <Viewport>
          <Scene />
          <OffsetPopup>
            <PopupGrip />
            偏置
            <PopupField>-32</PopupField>
            <ArrowBtn><ThickArrow /></ArrowBtn>
          </OffsetPopup>
        </Viewport>
      </Main>

      <StatusBar>
        <StatusLeft>选择文本要遵循的曲线</StatusLeft>
        <StatusRight><span>边</span><span>已选定</span></StatusRight>
      </StatusBar>

      <TaskBar>
        <TaskSlot $w={49} $left><StartOrb /></TaskSlot>
        <TaskSlot $w={65}><ExcelIcon /></TaskSlot>
        <TaskActive $w={58}><MonitorIcon /></TaskActive>
        <TaskBtn $w={159} $pl={9}><IEIcon />UG爱好者论坛-百...</TaskBtn>
        <TaskSlot $w={63}><CalcIcon /></TaskSlot>
        <TaskSlot $w={65}><BaiduIcon /></TaskSlot>
        <TaskBtn $w={158} $pl={9} $lit><NxLogo s={32} />NX 12 - 建模</TaskBtn>
        <TaskSlot $w={64}><WordIcon /></TaskSlot>
      </TaskBar>

      <Watermark>
        <HexMark />
        <MarkText>
          <MarkTitle><MarkLatin>3D</MarkLatin>世界网</MarkTitle>
          <MarkUrl>WWW.3DSJW.COM</MarkUrl>
        </MarkText>
      </Watermark>
    </Frame>
  )
}

export default App
